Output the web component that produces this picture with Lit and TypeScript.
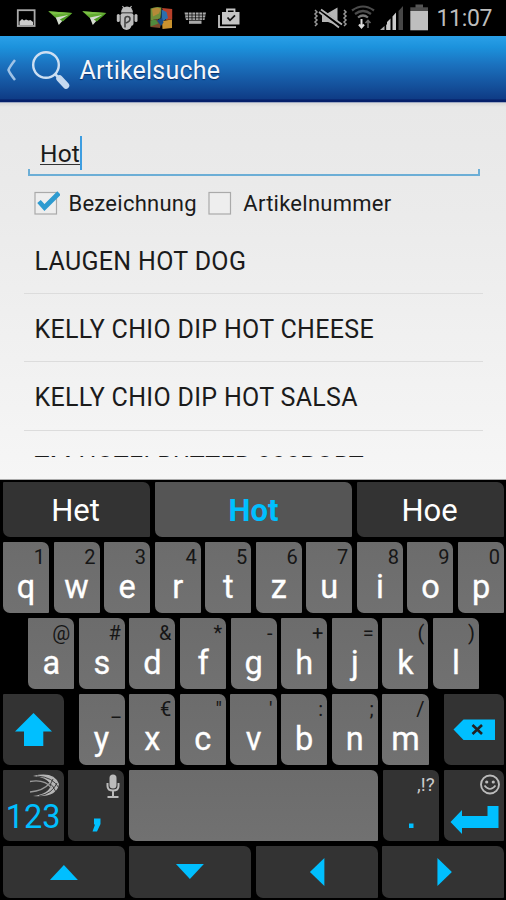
import { LitElement, html, svg, css, nothing } from "lit";
import { customElement, property } from "lit/decorators.js";

@customElement("status-bar")
class StatusBar extends LitElement {
  static styles = css`
    :host { display: flex; height: 36px; background: #000; justify-content: space-between; }
    svg { display: block; }
    .time { fill: #bdbdbd; font: 23px Roboto, sans-serif; }
  `;
  render() {
    const plane = (x: number) => svg`<g transform="translate(${x} 0)">
      <path d="M0 11.300L24 13 14.500 21 7.500 18z" fill="#62ab31"/><path d="M0 11.300L24 13 5 14.500z" fill="#7cc146"/>
      <path d="M7.500 17.500L20 15 14 21 10.500 25z" fill="#d5dccf"/><path d="M11.500 19.500L24 13 14.500 21.500z" fill="#4c9a22"/></g>`;
    return html`<svg width="506" height="36" viewBox="0 0 506 36">
      <rect x="17.800" y="10.200" width="16.800" height="15.800" fill="none" stroke="#aaa" stroke-width="1.800"/>
      <path d="M19.500 25v-3.500l2.500-2.500 2 1.500 2-1 2.500 1 2-.5 2.500 2V25z" fill="#ccc"/>
      ${plane(48.3)}${plane(82.3)}
      <g fill="#bdbdbd">
        <path d="M121 12.500a6 6 0 0 1 12 0z"/>
        <path d="M122.500 6l2 3M131.500 6l-2 3" stroke="#bdbdbd" stroke-width="1.200"/>
        <rect x="120.500" y="13.200" width="13" height="12.500" rx="2"/>
        <rect x="116.800" y="14" width="3" height="8" rx="1.500"/><rect x="134.500" y="14" width="3" height="8" rx="1.500"/>
        <rect x="121.500" y="19" width="10" height="11" rx="5"/>
      </g>
      <path d="M125 27.500v-8.500q0-2.500 2.500-2.500t2.500 2.500-4 4" fill="none" stroke="#444" stroke-width="1.600"/>
      <path d="M150.500 8.500q6-2.500 11-1l-1 11-10 2z" fill="#6f8f3a"/><path d="M152 9q4-2 9-.5l-2 5-6 3z" fill="#b58a38"/>
      <path d="M162 8l10.200 1v10.500l-6 .5z" fill="#b8402a"/>
      <path d="M150.500 20.500l7-1.500 4 3-1.500 6-9.500-1z" fill="#7c4a2c"/><path d="M150.500 20.500l5-1 3 4-8 3z" fill="#4f8a3e"/>
      <path d="M162 21l10-1.500v8.500l-9.500 1z" fill="#c9922e"/>
      <path d="M161.500 9.500l5 2.500 1.500 6-6.500 4z" fill="#2c6fae"/><path d="M157 20.500l5-3 1.500 5-2.500 3.500z" fill="#174c86"/>
      <path d="M184.500 12.500h21.500l-1.500 7.500h-18.500z" fill="#a9a9a9"/><rect x="189" y="20" width="12.500" height="3.800" fill="#a9a9a9"/>
      <path d="M185 15h21M186 17.800h19M188 20.400h15M188.500 12v8M192 12v8M195.500 12v8M199 12v8M202.500 12v8" stroke="#000" stroke-width=".7"/>
      <path d="M219 15v12.200h17" fill="none" stroke="#c4c4c4" stroke-width="1.800"/>
      <path d="M222 12h17.500v12.500H222z" fill="#c4c4c4"/><path d="M227 12V9.500h7.500V12" fill="none" stroke="#c4c4c4" stroke-width="1.800"/>
      <path d="M227.500 17.500l2.500 2.800 5-5" fill="none" stroke="#111" stroke-width="1.700"/>

      <path d="M315 10l2 2-2 2 2 2-2 2 2 2-2 2 2 2-2 2M344 10l2 2-2 2 2 2-2 2 2 2-2 2 2 2-2 2" fill="none" stroke="#999" stroke-width="1.500"/>
      <path d="M322 13h6l9.500-5.500v18L328 22h-6z" fill="#b5b5b5"/>
      <path d="M320.500 10.500L341 26" stroke="#000" stroke-width="4"/><path d="M321 9.500L342 24.500M319 12L339 27.500" stroke="#b5b5b5" stroke-width="1.800"/>
      <g fill="none" stroke="#4b4b4b" stroke-width="2.200"><path d="M352 10.500q11-8 22 0"/><path d="M355 14q8-6 16 0"/><path d="M358 17.500q5-4 10 0" stroke="#777"/></g>
      <path d="M361.500 19v7M359 24.500l2.500 3 2.500-3" fill="none" stroke="#ddd" stroke-width="2"/>
      <path d="M368 28v-7M365.500 23l2.500-2.500 2.500 2.500" fill="none" stroke="#666" stroke-width="1.600"/>
      <path d="M380 30l4.500-4v4zM386 25l3.500-3.500V30H386z" fill="#aaa"/><path d="M387 22l3.500-3.500V30H387zM392.500 16.500l3.500-4V30h-3.500z" fill="#ccc"/>
      <path d="M398.500 11l4.500-5V30h-4.500z" fill="#474747"/>
      <rect x="415.500" y="4.500" width="7.500" height="3.500" fill="#555"/><rect x="410.300" y="7.300" width="17.700" height="4" fill="#4c4c4c"/><rect x="410.300" y="11" width="17.700" height="19.300" fill="#bebebe"/>
      <text class="time" x="436.500" y="26" textLength="56">11:07</text>
    </svg>`;
  }
}

@customElement("title-bar")
class TitleBar extends LitElement {
  static styles = css`
    :host { display: flex; align-items: center; height: 67px; box-sizing: border-box; padding-left: 6px;
      background: linear-gradient(#2aa0e8 0, #1c92dc 17%, #1b73c0 42%, #15549f 72%, #0f3c86 95%, #06206a 97%); border-bottom: 1px solid #9ea8c2; }
    .back { width: 11px; height: 24px; margin-top: 1px; }
    .search { width: 40px; height: 40px; margin: 2px 0 0 14px; }
    .title { margin: 3px 0 0 8.500px; color: #f4f7fc; font: 25px/30px Roboto, sans-serif; letter-spacing: .2px; text-shadow: 0 1px 1px #0a2c66; }
  `;
  render() {
    return html`<svg class="back" viewBox="0 0 11 24"><path d="M9 2Q3.500 9 2.500 12 3.500 15 9 22" fill="none" stroke="#9fc3e6" stroke-width="2.500"/></svg>
      <svg class="search" viewBox="0 0 40 40"><circle cx="15" cy="15" r="12.800" fill="none" stroke="#cddff2" stroke-width="2.400"/>
      <path d="M24 24l4 4" stroke="#cddff2" stroke-width="2.500"/><path d="M28.500 28.500l6.500 7" stroke="#c5d9f0" stroke-width="6.500" stroke-linecap="round"/></svg>
      <div class="title">Artikelsuche</div>`;
  }
}

@customElement("search-panel")
class SearchPanel extends LitElement {
  static styles = css`
    :host { display: block; box-sizing: border-box; height: 377px; padding: 32px 0 0 24px; overflow: hidden;
      background: linear-gradient(#d9d9d9 0, #e8e8e8 4px, #ebebeb 30%, #f6f6f6 100%); border-bottom: 1px solid #aaa;
      font: 25px/30px Roboto, sans-serif; color: #1b1b1b; }
    .field { display: flex; align-items: flex-start; width: 452px; height: 41px; margin-left: 4px; padding: 2px 0 0 12px; box-sizing: border-box;
      background: linear-gradient(#6caed6, #6caed6) 0 100%/100% 2px no-repeat, linear-gradient(#6caed6, #6caed6) 0 100%/2px 7px no-repeat, linear-gradient(#6caed6, #6caed6) 100% 100%/2px 7px no-repeat; }
    .value { height: 27px; border-bottom: 1.500px solid #333; line-height: 32px; font-size: 24.500px; box-sizing: border-box; margin-top: 1px; letter-spacing: .2px; }
    .caret { width: 2px; height: 34px; margin-top: -1px; background: #3d9de0; }
    .options { display: flex; align-items: center; height: 30px; margin: 12px 0 0 10px; font-size: 22px; }
    .box { width: 26px; height: 24px; display: block; }
    .first, .second { margin: 2px 0 0 8.500px; letter-spacing: .25px; }
    .second { margin-left: 9.500px; }
    .gap { width: 11px; }
    .list { height: 239px; overflow: hidden; width: 459px; }
    .item { box-sizing: border-box; height: 68.400px; padding: 21px 0 0 10.500px; border-bottom: 1.500px solid #dcdcdc; white-space: nowrap; letter-spacing: .32px; }
    .item:first-child { height: 76px; padding-top: 29px; }
  `;
  render() {
    const items = ["LAUGEN HOT DOG", "KELLY CHIO DIP HOT CHEESE", "KELLY CHIO DIP HOT SALSA", "TM HOTELBUTTER 200PORT"];
    const box = (on: boolean) => html`<svg class="box" viewBox="0 0 26 24"><rect x="1" y="1.500" width="21.500" height="21.500" fill="#eee" stroke="#aaa" stroke-width="1.200"/>
      ${on ? svg`<path d="M5 10.500l5.500 6L25 2" fill="none" stroke="#2e9bd0" stroke-width="4.800"/>` : nothing}</svg>`;
    return html`<div class="field"><span class="value">Hot</span><span class="caret"></span></div>
      <div class="options">${box(true)}<span class="first">Bezeichnung</span><span class="gap"></span>${box(false)}<span class="second">Artikelnummer</span></div>
      <div class="list">${items.map((t) => html`<div class="item">${t}</div>`)}</div>`;
  }
}

@customElement("soft-key")
class SoftKey extends LitElement {
  @property() label = "";
  @property() hint = "";
  static styles = css`
    :host { display: grid; position: relative; height: 71px; background: linear-gradient(#6c6c6c, #717171); border-radius: 1px 7px 1px 7px; overflow: hidden;
      font-family: Roboto, sans-serif; color: #fff; box-sizing: border-box; }
    :host([dark]) { background: #333; color: #00bfff; }
    .label { text-align: center; font-size: 32.500px; line-height: 38px; padding-top: 26px; -webkit-text-stroke: .3px #fff; }
    .hint { position: absolute; top: 3px; right: 4px; color: #161616; font-size: 20px; line-height: 24px; }
    :host([dark]) .hint { color: #ccc; font-size: 19px; }
    :host([dark]) .label { -webkit-text-stroke: 0; padding-top: 28px; }
  `;
  render() {
    return html`${this.label ? html`<span class="label">${this.label}</span>` : nothing}${this.hint ? html`<span class="hint">${this.hint}</span>` : nothing}<slot></slot>`;
  }
}

@customElement("key-board")
class KeyBoard extends LitElement {
  static styles = css`
    :host { display: flex; flex-direction: column; gap: 5px; height: 420px; box-sizing: border-box; padding: 2.300px 2px 2px 3px; background: #000; }
    .suggest { display: grid; grid-template-columns: 147px 197px 147px; gap: 5px; height: 55px; margin-bottom: -.8px; }
    .word { box-sizing: border-box; height: 55px; background: #333; color: #fff; border-radius: 1px 7px 1px 7px; text-align: center; font: 31px/57px Roboto, sans-serif; padding-right: 2px; }
    .main { background: #555; color: #00bfff; font-weight: 700; padding-right: 0; }
    .row { display: grid; gap: 4.600px; height: 71px; }
    .r1 { grid-template-columns: repeat(10, 1fr); }
    .r2 { grid-template-columns: repeat(9, 1fr); margin: 0 25px 0 25.300px; }
    .letters { display: grid; grid-template-columns: repeat(7, 1fr); gap: 4.600px; }
    .r3 { grid-template-columns: 60.500px 350px 60.500px; gap: 0; justify-content: space-between; }
    .r4 { grid-template-columns: 60.500px 56px 248.500px 56px 60.500px; gap: 0; justify-content: space-between; }
    .r5 { grid-template-columns: repeat(4, 1fr); height: 52px; }
    .r5 soft-key { height: 52px; }
    svg { display: block; width: 100%; height: 100%; fill: #00bfff; }
    .over { position: absolute; inset: 0; }
  `;
  render() {
    const keys = (s: string, h: string[]) => [...s].map((c, i) => html`<soft-key label=${c} hint=${h[i]}></soft-key>`);
    const arrow = (d: string) => html`<soft-key dark><svg viewBox="0 0 122 52"><path d=${d} /></svg></soft-key>`;
    return html`
      <div class="suggest"><div class="word">Het</div><div class="word main">Hot</div><div class="word">Hoe</div></div>
      <div class="row r1">${keys("qwertzuiop", [..."1234567890"])}</div>
      <div class="row r2">${keys("asdfghjkl", [..."@#&*-+=()"])}</div>
      <div class="row r3">
        <soft-key dark><svg viewBox="0 0 60.500 71"><path d="M30.500 19L49 37.500H40.300V52H21V37.500H12z"/></svg></soft-key>
        <div class="letters">${keys("yxcvbnm", ["_", "€", "\"", "'", ":", ";", "/"])}</div>
        <soft-key dark><svg viewBox="0 0 60.500 71"><path d="M9.500 35.500L19.500 25.500H51V46H19.500z"/><path d="M28.500 31l9.500 9M38 31l-9.500 9" stroke="#222" stroke-width="2.600"/></svg></soft-key>
      </div>
      <div class="row r4">
        <soft-key dark label="123"><svg class="over" viewBox="0 0 60.500 71">
          <path d="M30 6Q51 1 56 14 54 28 30 26 46 24 48 15 44 7 30 6z" fill="#b5b5b5"/>
          <path d="M28 8.500Q48 8 53 22M34 6Q50 7 56 18M29 23Q46 22 50 9M36 26Q49 24 54 13" fill="none" stroke="#333" stroke-width=".9"/>
          <path d="M27 11.500Q42 9 48.500 18M27 22Q40 21 47 13" fill="none" stroke="#999" stroke-width="1.300"/></svg></soft-key>
        <soft-key dark><svg viewBox="0 0 56 71"><rect x="41.500" y="4.500" width="7" height="14" rx="3.500" fill="#bbb"/><path d="M39.500 13v3q0 4.500 5.500 4.500t5.500-4.500v-3M45 20v6M39.500 27h11" fill="none" stroke="#bbb" stroke-width="2"/><path d="M26 48.500h6.500v5.500L29 61.500H24.500L27 54.500H26z"/></svg></soft-key>
        <soft-key></soft-key>
        <soft-key dark hint=",!?"><svg viewBox="0 0 56 71"><rect x="26" y="53.500" width="4.500" height="4.500"/></svg></soft-key>
        <soft-key dark><svg viewBox="0 0 60.500 71"><circle cx="46" cy="14.500" r="9" fill="none" stroke="#bbb" stroke-width="1.900"/><circle cx="42.700" cy="12" r="1.600" fill="#bbb"/><circle cx="49.300" cy="12" r="1.600" fill="#bbb"/><path d="M40.500 15.500q5.500 7 11 0" fill="none" stroke="#bbb" stroke-width="1.700"/>
          <path d="M6.500 52L18 40V46H43.500V36H54.500V58H18V64z"/></svg></soft-key>
      </div>
      <div class="row r5">${arrow("M61 19L75 34H47z")}${arrow("M47 18H75L61 33z")}${arrow("M54 26L68.500 12V40z")}${arrow("M70 26L55.500 12V40z")}</div>`;
  }
}

@customElement("app-root")
class AppRoot extends LitElement {
  static styles = css`:host { display: flex; flex-direction: column; width: 506px; height: 900px; overflow: hidden; background: #000; }
    status-bar, title-bar, search-panel, key-board { flex: none; }`;
  render() {
    return html`<status-bar></status-bar><title-bar></title-bar><search-panel></search-panel><key-board></key-board>`;
  }
}
